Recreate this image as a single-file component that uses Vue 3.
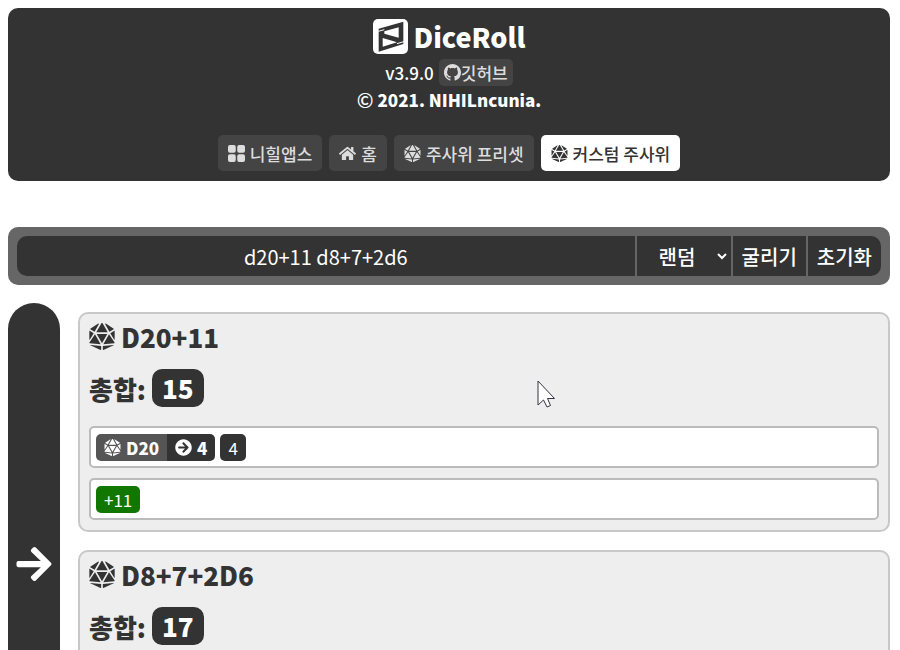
<script setup>
import { h, ref } from 'vue'

const shapes = {
  d20: ['0 0 480 512', 'M106.75 215.06L1.2 370.95c-3.08 5 .1 11.5 5.93 12.14l208.26 22.07-108.64-190.1zM7.41 315.43L82.7 193.08 6.06 147.1c-2.67-1.62-6.06.3-6.06 3.43v162.81c0 4.03 5.29 5.53 7.41 2.09zM18.25 423.6l194.4 87.66c5.3 2.45 11.35-1.43 11.35-7.26v-65.67l-203.55-22.3c-4.45-.5-6.23 5.59-2.2 7.57zm81.22-257.78L179.4 22.88c4.34-7.06-3.59-15.25-10.78-11.14L17.81 110.35c-2.47 1.62-2.39 5.26.13 6.78l81.53 48.69zM240 176h109.21L253.63 7.62C250.5 2.54 245.25 0 240 0s-10.5 2.54-13.63 7.62L130.79 176H240zm233.94-28.9l-76.64 45.99 75.29 122.35c2.11 3.44 7.41 1.94 7.41-2.1V150.53c0-3.11-3.39-5.03-6.06-3.43zm-93.41 18.72l81.53-48.7c2.53-1.52 2.6-5.16.13-6.78l-150.81-98.6c-7.19-4.11-15.12 4.08-10.78 11.14l79.93 142.94zm79.02 250.21L256 438.32v65.67c0 5.84 6.05 9.71 11.35 7.26l194.4-87.66c4.03-1.97 2.25-8.06-2.2-7.56zm-86.3-200.97l-108.63 190.1 208.26-22.07c5.83-.65 9.01-7.14 5.93-12.14L373.25 215.06zM240 208H139.57L240 383.75 340.43 208H240z'],
  home: ['0 0 576 512', 'M280.37 148.26L96 300.11V464a16 16 0 0 0 16 16l112.06-.29a16 16 0 0 0 15.92-16V368a16 16 0 0 1 16-16h64a16 16 0 0 1 16 16v95.64a16 16 0 0 0 16 16.05L464 480a16 16 0 0 0 16-16V300L295.67 148.26a12.19 12.19 0 0 0-15.3 0zM571.6 251.47L488 182.56V44.05a12 12 0 0 0-12-12h-56a12 12 0 0 0-12 12v72.61L318.47 43a48 48 0 0 0-61 0L4.34 251.47a12 12 0 0 0-1.6 16.9l25.5 31A12 12 0 0 0 45.15 301l235.22-193.74a12.19 12.19 0 0 1 15.3 0L530.9 301a12 12 0 0 0 16.9-1.6l25.5-31a12 12 0 0 0-1.7-16.93z'],
  apps: ['0 0 16 16', 'M1.8 0h3.700a1.800 1.800 0 0 1 1.800 1.800v3.700a1.800 1.800 0 0 1-1.800 1.800H1.800A1.800 1.800 0 0 1 0 5.500V1.800A1.800 1.800 0 0 1 1.800 0zM10.500 0h3.700A1.800 1.800 0 0 1 16 1.800v3.700a1.800 1.800 0 0 1-1.800 1.800h-3.700a1.800 1.800 0 0 1-1.800-1.800V1.800A1.800 1.800 0 0 1 10.500 0zM1.800 8.700h3.700a1.800 1.800 0 0 1 1.800 1.800v3.700A1.800 1.800 0 0 1 5.500 16H1.800A1.800 1.800 0 0 1 0 14.200v-3.700a1.800 1.800 0 0 1 1.800-1.800zM10.500 8.700h3.700a1.800 1.800 0 0 1 1.800 1.800v3.700a1.800 1.800 0 0 1-1.800 1.800h-3.700a1.800 1.800 0 0 1-1.800-1.800v-3.700a1.800 1.800 0 0 1 1.800-1.800z'],
  github: ['0 0 16 16', 'M8 0C3.580 0 0 3.580 0 8c0 3.540 2.290 6.530 5.470 7.590.4.07.55-.17.55-.38 0-.19-.01-.82-.01-1.490-2.010.37-2.530-.49-2.690-.94-.09-.23-.48-.94-.82-1.130-.28-.15-.68-.52-.01-.53.63-.01 1.080.58 1.230.82.72 1.210 1.870.87 2.330.66.07-.52.28-.87.51-1.070-1.780-.2-3.640-.89-3.640-3.950 0-.87.31-1.590.82-2.150-.08-.2-.36-1.020.08-2.120 0 0 .67-.21 2.200.82.64-.18 1.320-.27 2-.27.68 0 1.360.09 2 .27 1.530-1.040 2.200-.82 2.200-.82.44 1.100.16 1.920.08 2.120.51.56.82 1.270.82 2.150 0 3.070-1.870 3.750-3.650 3.950.29.25.54.73.54 1.480 0 1.070-.01 1.930-.01 2.200 0 .21.15.46.55.38A8.013 8.013 0 0 0 16 8c0-4.420-3.580-8-8-8z'],
  circle: ['0 0 512 512', 'M256 8c137 0 248 111 248 248S393 504 256 504 8 393 8 256 119 8 256 8zm-28.900 143.600l75.500 72.400H120c-13.300 0-24 10.700-24 24v16c0 13.300 10.700 24 24 24h182.600l-75.500 72.400c-9.700 9.300-9.900 24.800-.4 34.300l11 10.900c9.400 9.400 24.600 9.400 33.900 0L404.300 273c9.400-9.400 9.400-24.600 0-33.900L271.600 106.300c-9.400-9.400-24.600-9.400-33.900 0l-11 10.900c-9.500 9.600-9.300 25.100.4 34.400z'],
  arrow: ['0 0 448 512', 'M190.500 66.900l22.200-22.200c9.400-9.400 24.600-9.400 33.900 0L441 239c9.400 9.400 9.400 24.600 0 33.900L246.600 467.300c-9.400 9.400-24.600 9.400-33.900 0l-22.200-22.200c-9.500-9.500-9.300-25 .4-34.300L311.400 296H24c-13.300 0-24-10.700-24-24v-32c0-13.300 10.700-24 24-24h287.400L190.900 101.200c-9.800-9.300-10-24.800-.4-34.300z'],
}

const Icon = ({ name }) =>
  h('svg', { viewBox: shapes[name][0], fill: 'currentColor', 'aria-hidden': 'true' }, [
    h('path', { d: shapes[name][1] }),
  ])
Icon.props = ['name']

const nav = [
  { icon: 'apps', label: '니힐앱스' },
  { icon: 'home', label: '홈' },
  { icon: 'd20', label: '주사위 프리셋' },
  { icon: 'd20', label: '커스텀 주사위', active: true },
]

const formula = ref('d20+11 d8+7+2d6')
const mode = ref('random')

const results = [
  {
    title: 'D20+11',
    total: 15,
    rows: [{ die: 'D20', sum: 4, rolls: [4] }, { bonus: '+11' }],
  },
  { title: 'D8+7+2D6', total: 17, rows: [] },
]
</script>

<template>
  <div class="page">
    <header class="top">
      <h1 class="brand">
        <svg class="logo" viewBox="0 0 105 105" aria-hidden="true">
          <rect width="105" height="105" rx="15" fill="#fff" />
          <path d="M17 29 91 8V75L17 98Z" fill="#333" />
          <path d="M34 37 77 25V56L34 44Z" fill="#fff" />
          <path d="M29 57 72 70 29 83Z" fill="#fff" />
          <path d="M16 37 34 32M72 74 92 68" stroke="#fff" stroke-width="3" />
        </svg>
        <span>DiceRoll</span>
      </h1>
      <p class="version">
        <span>v3.9.0</span>
        <a class="github" href="#"><Icon name="github" class="ico-github" />깃허브</a>
      </p>
      <p class="copy"><span class="mark">©</span> 2021. NIHILncunia.</p>
      <nav class="nav">
        <a
          v-for="item in nav"
          :key="item.label"
          href="#"
          class="nav-link"
          :class="{ active: item.active }"
        ><Icon :name="item.icon" class="ico-nav" />{{ item.label }}</a>
      </nav>
    </header>

    <form class="roller" @submit.prevent>
      <input v-model="formula" class="field formula" type="text" aria-label="주사위" />
      <div class="field select-wrap">
        <select v-model="mode" class="mode" aria-label="랜덤">
          <option value="random">랜덤</option>
        </select>
        <svg class="chevron" viewBox="0 0 10 8" aria-hidden="true">
          <path d="M1 2 5 6 9 2" fill="none" stroke="currentColor" stroke-width="2" />
        </svg>
      </div>
      <button class="field" type="submit">굴리기</button>
      <button class="field" type="reset">초기화</button>
    </form>

    <main class="board">
      <button class="side" type="button" aria-label="열기"><Icon name="arrow" class="ico-side" /></button>
      <div class="results">
        <section v-for="r in results" :key="r.title" class="card">
          <h2 class="title"><Icon name="d20" class="ico-title" />{{ r.title }}</h2>
          <p class="total">총합: <span class="total-value">{{ r.total }}</span></p>
          <div v-for="(row, i) in r.rows" :key="i" class="row">
            <template v-if="row.die">
              <span class="die">
                <span class="die-name"><Icon name="d20" class="ico-die" />{{ row.die }}</span>
                <span class="die-sum"><Icon name="circle" class="ico-die" />{{ row.sum }}</span>
              </span>
              <span v-for="(n, j) in row.rolls" :key="j" class="chip">{{ n }}</span>
            </template>
            <span v-else class="chip bonus">{{ row.bonus }}</span>
          </div>
        </section>
      </div>
    </main>

    <svg class="pointer" viewBox="0 0 18 28" aria-hidden="true">
      <path d="M1 1V25L6.500 20 10 27 13.500 25.500 10.500 18.500H17.500Z" fill="#fff" stroke="#334" stroke-width="1" />
    </svg>
  </div>
</template>

<style>
body {
  background: #fff;
}
</style>

<style scoped>
.page {
  box-sizing: border-box;
  position: relative;
  height: 100vh;
  overflow: hidden;
  padding: 8px 10px 0 8px;
  color: #333;
  font-family: "Noto Sans CJK KR", sans-serif;
  font-size: 17px;
}
.page * {
  box-sizing: border-box;
}
.page svg {
  display: block;
  flex: none;
}
h1, h2, p {
  margin: 0;
}
a {
  text-decoration: none;
}
button, input, select {
  font: inherit;
  color: inherit;
  margin: 0;
}
.top {
  display: flex;
  flex-direction: column;
  align-items: center;
  padding: 10px;
  border-radius: 10px;
  background: #333;
  color: #fff;
}
.brand {
  display: flex;
  align-items: center;
  gap: 6px;
  height: 36px;
  font-size: 27px;
  font-weight: 900;
}
.logo {
  width: 35px;
  height: 35px;
}
.version {
  display: flex;
  align-items: center;
  gap: 5px;
  height: 27px;
  margin-top: 5px;
  font-weight: 500;
}
.github {
  display: flex;
  align-items: center;
  height: 27px;
  padding: 0 5px;
  border-radius: 5px;
  background: #444;
  color: #ddd;
}
.ico-github {
  width: 17px;
  height: 17px;
}
.copy {
  display: flex;
  align-items: center;
  gap: 4px;
  line-height: 27px;
  font-weight: 900;
}
.mark {
  font-size: 20px;
  font-weight: 500;
}
.nav {
  display: flex;
  flex-wrap: wrap;
  justify-content: center;
  gap: 7px;
  margin-top: 22px;
}
.nav-link {
  display: flex;
  align-items: center;
  gap: 5px;
  height: 36px;
  padding: 0 10px;
  border-radius: 5px;
  background: #444;
  color: #ddd;
  font-weight: 500;
}
.nav-link.active {
  background: #fff;
  color: #333;
}
.ico-nav {
  width: 17px;
  height: 17px;
}
.roller {
  display: flex;
  gap: 2px;
  margin-top: 46px;
  padding: 9px;
  border-radius: 10px;
  background: #666;
  color: #fff;
  font-size: 20px;
  font-weight: 500;
}
.field {
  height: 40px;
  padding: 0 9px;
  border: 0;
  background: #333;
  outline: 0;
}
.field:first-child {
  border-radius: 10px 0 0 10px;
}
.field:last-child {
  border-radius: 0 10px 10px 0;
}
.formula {
  flex: 1;
  min-width: 0;
  text-align: center;
  font-weight: 400;
}
.select-wrap {
  position: relative;
  width: 94px;
  padding: 0;
}
.mode {
  appearance: none;
  width: 100%;
  height: 100%;
  padding: 0 36px 0 22px;
  border: 0;
  background: transparent;
}
.chevron {
  position: absolute;
  top: 16px;
  right: 4px;
  width: 10px;
  height: 8px;
  pointer-events: none;
}
.board {
  display: flex;
  gap: 18px;
  margin-top: 18px;
}
.side {
  flex: none;
  display: grid;
  place-items: center;
  width: 52px;
  padding: 0;
  border: 0;
  border-radius: 26px;
  background: #333;
  color: #fff;
}
.ico-side {
  width: 36px;
  height: 40px;
}
.results {
  flex: 1;
  min-width: 0;
  display: flex;
  flex-direction: column;
  gap: 18px;
  padding: 9px 0;
}
.card {
  padding: 9px 9px 10px;
  border: 2px solid #c8c8c8;
  border-radius: 10px;
  background: #eee;
}
.card:last-child {
  min-height: 266px;
}
.title {
  display: flex;
  align-items: center;
  gap: 6px;
  height: 27px;
  font-size: 26px;
  font-weight: 900;
}
.ico-title {
  width: 26px;
  height: 27px;
}
.total {
  display: flex;
  align-items: center;
  gap: 6px;
  height: 38px;
  margin: 19px 0;
  font-size: 26px;
  font-weight: 900;
}
.total-value {
  padding: 0 10px;
  border-radius: 10px;
  background: #333;
  color: #fff;
  line-height: 38px;
}
.row {
  display: flex;
  flex-wrap: wrap;
  gap: 5px;
  padding: 6px 5px 5px;
  border: 2px solid #bbb;
  border-radius: 5px;
  background: #fff;
}
.row + .row {
  margin-top: 10px;
}
.die {
  display: flex;
  overflow: hidden;
  border-radius: 5px;
  color: #fff;
  font-weight: 900;
}
.die-name, .die-sum {
  display: flex;
  align-items: center;
  gap: 5px;
  height: 27px;
  padding: 0 8px;
}
.die-name {
  background: #555;
}
.die-sum {
  background: #333;
}
.ico-die {
  width: 17px;
  height: 17px;
}
.chip {
  padding: 0 8px;
  border-radius: 5px;
  background: #333;
  color: #fff;
  line-height: 27px;
}
.bonus {
  background: #170;
}
.pointer {
  position: absolute;
  left: 537px;
  top: 380px;
  width: 18px;
  height: 28px;
  pointer-events: none;
}
</style>
